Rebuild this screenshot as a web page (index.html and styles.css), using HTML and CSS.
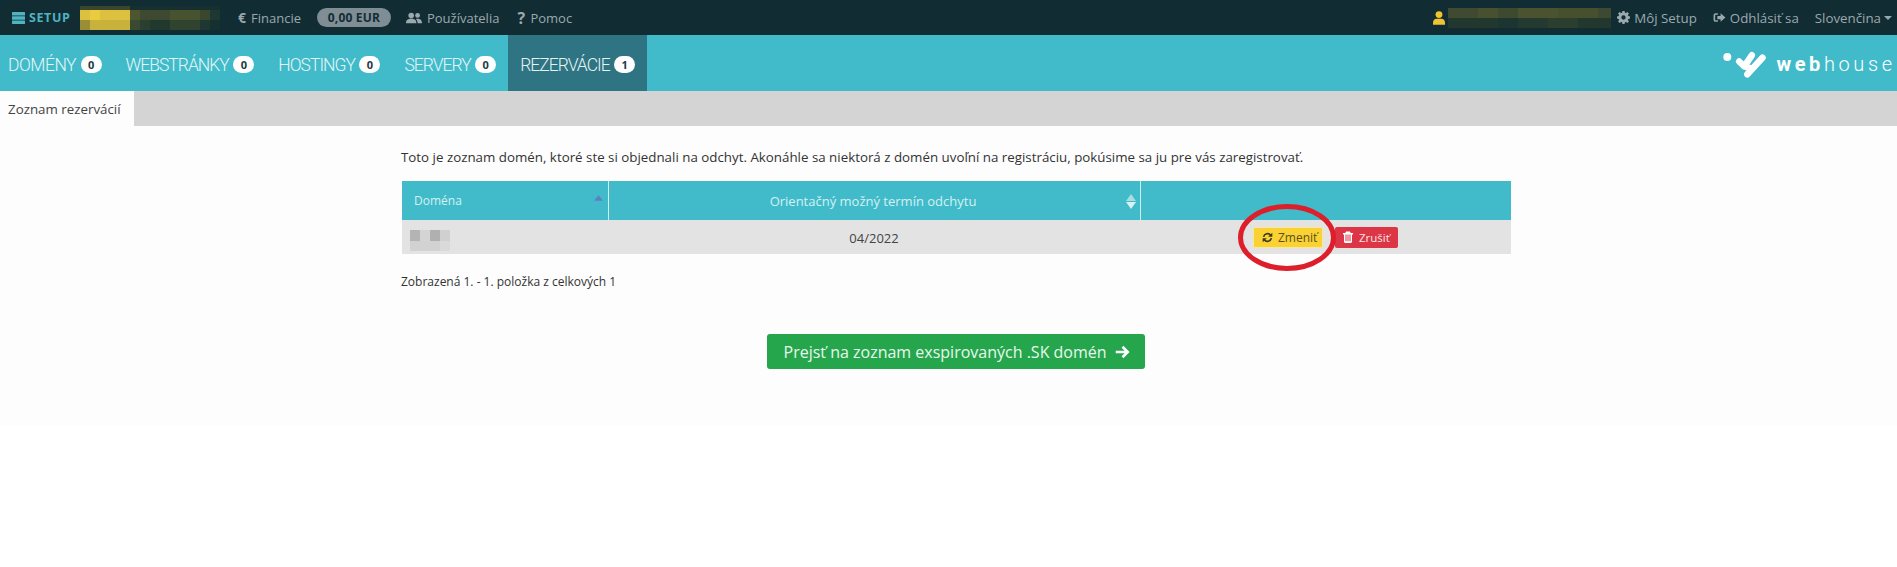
FILE: index.html
```html
<!DOCTYPE html>
<html lang="sk">
<head>
<meta charset="utf-8">
<title>Zoznam rezervácií</title>
<link rel="stylesheet" href="styles.css">
</head>
<body>
<header class="topbar">
  <div class="topbar-left">
    <a class="brand"><svg class="ico-setup" viewBox="0 0 13 12"><rect width="13" height="3.500" y="0" rx=".5"/><rect width="13" height="3.500" y="4.250" rx=".5"/><rect width="13" height="3.500" y="8.500" rx=".5"/></svg>SETUP</a>
    <div class="blur blur-account"></div>
    <a class="tlink fin"><span class="euro">€</span>Financie</a>
    <span class="balance">0,00 EUR</span>
    <a class="tlink users"><svg class="ico" viewBox="0 0 20 14"><circle cx="6.500" cy="3.800" r="3.500"/><circle cx="14.500" cy="3.800" r="3"/><path d="M0 13.500c0-4 2.500-5.500 6.500-5.500s6.500 1.500 6.500 5.500zM14.500 13.500c0-2.500-.8-4.300-2.300-5.400.7-.2 1.300-.2 2-.2 3.500 0 5.800 1.500 5.800 5.600z"/></svg>Používatelia</a>
    <a class="tlink help"><span class="qm">?</span>Pomoc</a>
  </div>
  <div class="topbar-right">
    <svg class="ico-user" viewBox="0 0 14 16"><circle cx="7" cy="4" r="4"/><path d="M0 16v-2.500c0-3 2-4.500 4-4.500h6c2 0 4 1.500 4 4.500V16z"/></svg>
    <div class="blur blur-user"></div>
    <a class="tlink setup"><svg class="ico-sq" viewBox="0 0 24 24"><path fill-rule="evenodd" d="M10 0h4l.6 3.100 1.900.8L19.200 2l2.800 2.800-1.900 2.700.8 1.900 3.100.6v4l-3.100.6-.8 1.900 1.900 2.700-2.800 2.800-2.700-1.900-1.900.8L14 24h-4l-.6-3.100-1.900-.8L4.800 22 2 19.200l1.900-2.700-.8-1.900L0 14v-4l3.100-.6.800-1.900L2 4.800 4.800 2l2.700 1.900 1.900-.8zM12 8a4 4 0 1 0 0 8 4 4 0 0 0 0-8z"/></svg>Môj Setup</a>
    <a class="tlink logout"><svg class="ico-sq" viewBox="0 0 24 24"><path d="M9 4H5a4 4 0 0 0-4 4v8a4 4 0 0 0 4 4h4v-3H5a1 1 0 0 1-1-1V8a1 1 0 0 1 1-1h4zM14 4l9 8-9 8v-5H8V9h6z"/></svg>Odhlásiť sa</a>
    <a class="tlink lang">Slovenčina<span class="caret"></span></a>
  </div>
</header>
<nav class="mainnav">
  <ul class="tabs">
    <li class="tab first">DOMÉNY<span class="count">0</span></li>
    <li class="tab">WEBSTRÁNKY<span class="count">0</span></li>
    <li class="tab">HOSTINGY<span class="count">0</span></li>
    <li class="tab">SERVERY<span class="count">0</span></li>
    <li class="tab active">REZERVÁCIE<span class="count">1</span></li>
  </ul>
  <div class="logo">
    <svg class="logo-mark" viewBox="0 0 44 27"><circle cx="4.300" cy="6" r="4" fill="#fff"/><path d="M16.200 10.500L21.300 15.300L28.800 4.300M24.300 23.300L39.500 6.700M21.300 15.300L27 17" stroke="#fff" stroke-width="6.500" stroke-linecap="round" stroke-linejoin="round" fill="none"/></svg>
    <span class="logo-text"><b>web</b>house</span>
  </div>
</nav>
<div class="subnav"><span class="subtab">Zoznam rezervácií</span></div>
<main class="content">
  <div class="inner">
    <p class="intro">Toto je zoznam domén, ktoré ste si objednali na odchyt. Akonáhle sa niektorá z domén uvoľní na registráciu, pokúsime sa ju pre vás zaregistrovať.</p>
    <table class="grid">
      <thead>
        <tr>
          <th class="c1">Doména<svg class="sort-up" viewBox="0 0 10 6"><path d="M5 0l5 6H0z"/></svg></th>
          <th class="c2"><span class="th-label">Orientačný možný termín odchytu</span><svg class="sort-both" viewBox="0 0 10 15"><path class="up" d="M5 0l5 7H0z"/><path class="down" d="M5 15l5-7H0z"/></svg></th>
          <th class="c3"></th>
        </tr>
      </thead>
      <tbody>
        <tr>
          <td class="c1"><div class="blur blur-domain"></div></td>
          <td class="c2">04/2022</td>
          <td class="c3">
            <div class="actions">
              <a class="btn btn-yellow"><svg class="ico-btn" viewBox="0 0 24 24"><path fill="none" stroke="#3c3a20" stroke-width="3.600" d="M3.500 10.500A8.800 8.800 0 0 1 19 7M20.500 13.500A8.800 8.800 0 0 1 5 17"/><path fill="#3c3a20" d="M22.500 1.500v9h-9zM1.500 22.500v-9h9z"/></svg>Zmeniť</a>
              <a class="btn btn-red"><svg class="ico-trash" viewBox="0 0 20 24"><path fill="#fff" fill-rule="evenodd" d="M6 1h8l1.500 3H20v3h-2v14a3 3 0 0 1-3 3H5a3 3 0 0 1-3-3V7H0V4h4.500zM5 7v13.500h2V7zM9 7v13.500h2V7zM13 7v13.500h2V7z"/></svg>Zrušiť</a>
              <svg class="mark" viewBox="0 0 98 67"><ellipse cx="49" cy="33.500" rx="46.500" ry="31" fill="none" stroke="#dc1f2a" stroke-width="5"/></svg>
            </div>
          </td>
        </tr>
      </tbody>
    </table>
    <p class="summary">Zobrazená 1. - 1. položka z celkových 1</p>
    <div class="cta-row">
      <a class="cta">Prejsť na zoznam exspirovaných .SK domén<svg class="ico-arrow" viewBox="0 0 20 18"><path fill="none" stroke="#fff" stroke-width="3.400" d="M1 9h16M10 2l7 7-7 7"/></svg></a>
    </div>
  </div>
</main>
</body>
</html>
```
FILE: styles.css
```css
* { box-sizing: border-box; }
html, body { margin: 0; padding: 0; background: #fff; }
body { font-family: "Open Sans", sans-serif; font-size: 12px; color: #333; }
a { color: inherit; text-decoration: none; }
.topbar { height: 35px; background: #122c34; display: flex; justify-content: space-between; align-items: center; padding: 0 5px 0 12px; color: #9aa9ad; }
.topbar-left, .topbar-right { display: flex; align-items: center; height: 100%; }
.brand { display: flex; align-items: center; color: #4fb3c0; font-weight: 700; font-size: 12.500px; letter-spacing: .6px; width: 57px; }
.ico-setup { width: 13px; height: 12px; fill: #4fb3c0; margin-right: 4px; flex: none; }
.blur { flex: none; }
.blur-account {
  width: 140px; height: 24px; margin-left: 11px;
  background-repeat: no-repeat;
  background-size: 100% 4px, 100% 10px, 100% 10px;
  background-position: 0 0, 0 4px, 0 14px;
  background-image:
    linear-gradient(90deg, #3c452d 0 50px, #16302f 50px),
    linear-gradient(90deg, #dcc040 0 10px, #eacb3e 10px 20px, #dcc040 20px 50px, #4e5630 50px 60px, #3d4a31 60px 90px, #47522f 90px 120px, #39472f 120px 130px, #1e3732 130px),
    linear-gradient(90deg, #9a8d38 0 10px, #c9b23c 10px 50px, #394a30 50px 60px, #2a3f30 60px 70px, #21382f 70px 90px, #2f432f 90px 120px, #1e3732 120px 130px, #14302f 130px);
}
.tlink { display: flex; align-items: center; font-size: 13px; white-space: nowrap; }
.fin { margin-left: 18px; }
.euro { font-weight: 700; margin-right: 4px; font-size: 14px; width: 9px; }
.balance { margin: 0 15px 0 16px; background: #7e8e94; color: #122c34; font-weight: 700; font-size: 12px; border-radius: 10px; height: 19px; line-height: 19px; width: 74px; text-align: center; letter-spacing: .2px; }
.ico { width: 16px; height: 12px; fill: #9aa9ad; margin-right: 5px; }
.help { margin-left: 18px; }
.qm { font-weight: 700; font-size: 16px; margin-right: 4px; width: 9px; }
.ico-user { width: 12px; height: 14px; fill: #f0c430; flex: none; }
.blur-user {
  width: 163px; height: 20px; margin-left: 3px; margin-right: 6px;
  background-repeat: no-repeat;
  background-size: 100% 10px, 100% 10px;
  background-position: 0 0, 0 10px;
  background-image:
    linear-gradient(90deg, #3f4a30 0 30px, #47502f 30px 50px, #3e4a30 50px 70px, #4a5230 70px 110px, #46502f 110px 150px, #3d4930 150px),
    linear-gradient(90deg, #22382f 0 50px, #1c3530 50px 70px, #24392f 70px 100px, #2c3f2f 100px 130px, #22382f 130px);
}
.topbar-right .tlink { font-size: 13.300px; }
.ico-sq { width: 13px; height: 13px; fill: #9aa9ad; margin-right: 4px; }
.logout, .lang { margin-left: 16px; }
.caret { display: inline-block; margin-left: 3px; border: 4px solid transparent; border-top-color: #9aa9ad; border-bottom: 0; }
.mainnav { height: 56px; background: #41bbc9; display: flex; justify-content: space-between; color: #d9f2f5; }
.tabs { display: flex; list-style: none; margin: 0; padding: 0; }
.tab { display: flex; align-items: center; font-family: Roboto, sans-serif; font-size: 17.500px; font-weight: 300; letter-spacing: -1px; padding: 4px 12px 0; white-space: nowrap; color: #e3f6f8; }
.tab.first { padding-left: 8px; letter-spacing: -.5px; }
.tab.active { background: #2e7482; color: #e6f3f5; }
.count { background: #fff; color: #1d3a42; border-radius: 9px; font-family: "Open Sans", sans-serif; font-size: 11px; font-weight: 700; letter-spacing: 0; height: 17px; line-height: 17px; width: 21px; text-align: center; margin-left: 4.500px; position: relative; top: -1px; }
.logo { display: flex; align-items: center; color: #fff; padding: 2px 5px 0 0; }
.logo-mark { width: 44px; height: 27px; margin-right: 9px; }
.logo-text { font-family: Roboto, sans-serif; font-size: 20px; letter-spacing: 3.600px; font-weight: 300; margin-right: -3.600px; }
.logo-text b { font-weight: 700; }
.subnav { height: 35px; background: #d4d4d4; display: flex; }
.subtab { width: 134px; background: #fdfdfd; display: flex; align-items: center; padding-left: 8px; font-size: 13.330px; color: #444; }
.content { background: #fdfdfd; height: 299px; padding-top: 22px; }
.inner { width: 1110px; margin-left: 401px; }
.intro { margin: 0; font-size: 13.330px; line-height: 18px; color: #333; }
.grid { width: 1109px; margin: 15px 0 0 1px; border-collapse: collapse; table-layout: fixed; font-size: 13px; }
.grid th { height: 39px; background: #41bbc9; color: #d5f0f3; font-weight: 400; font-size: 12px; position: relative; border-left: 1px solid #cfeef2; padding: 0; }
.grid th:first-child { border-left: 0; text-align: left; padding-left: 12px; }
.grid th.c2 { font-size: 13px; }
.th-label { position: relative; left: -1px; }
.grid td { height: 34px; background: #e3e3e3; text-align: center; padding: 0; color: #444; }
.grid td.c1 { vertical-align: top; padding-top: 10px; }
.grid td.c2 { padding-top: 1px; }
.grid .c1 { width: 206px; }
.grid .c2 { width: 532px; }
.blur-domain {
  width: 40px; height: 21px; margin-left: 8px;
  background-repeat: no-repeat;
  background-size: 100% 11px, 100% 10px;
  background-position: 0 0, 0 11px;
  background-image:
    linear-gradient(90deg, #b4b4b4 0 10px, #d4d4d4 10px 20px, #b0b0b0 20px 30px, #d0d0d0 30px),
    linear-gradient(90deg, #d2d2d2 0 30px, #dadada 30px);
}
.sort-up { position: absolute; right: 5px; top: 14px; width: 9px; height: 6px; fill: #5f7fc4; }
.sort-both { position: absolute; right: 4px; top: 13px; width: 10px; height: 15px; }
.sort-both .up { fill: #a8dde3; }
.sort-both .down { fill: #d8f1f4; }
.actions { display: flex; align-items: center; gap: 12px; position: relative; width: fit-content; margin: 0 auto; }
.btn { display: inline-flex; align-items: center; height: 21px; border-radius: 2px; font-size: 12px; white-space: nowrap; }
.btn-yellow { width: 70px; padding-left: 8px; background: #fbd233; color: #5a4f1e; border: 1px solid #fbe69a; }
.btn-red { width: 63px; padding-left: 8px; background: #dc3545; color: #fbe4e6; font-size: 11.500px; }
.ico-btn { width: 11px; height: 11px; margin-right: 5px; flex: none; }
.ico-trash { width: 10px; height: 12px; margin-right: 6px; flex: none; }
.mark { position: absolute; left: -15px; top: -23px; width: 98px; height: 67px; pointer-events: none; }
.summary { margin: 19px 0 0; font-size: 12px; line-height: 18px; }
.cta-row { text-align: center; margin-top: 43px; padding-right: 1px; }
.cta { display: inline-flex; align-items: center; height: 35px; width: 378px; padding-left: 17px; background: #26a64c; color: #e6f8ec; border-radius: 3px; font-size: 16px; font-weight: 400; white-space: nowrap; }
.ico-arrow { width: 15px; height: 14px; margin-left: 8px; }
```
